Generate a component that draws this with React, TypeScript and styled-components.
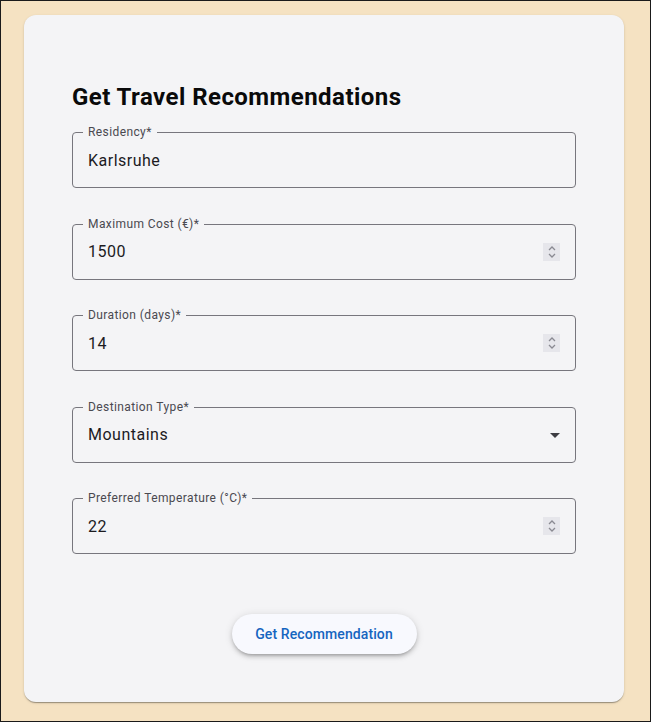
import React from "react";
import styled, { createGlobalStyle } from "styled-components";

const Global = createGlobalStyle`
  html, body { margin: 0; padding: 0; }
  body { font-family: Roboto, "Noto Sans", sans-serif; }
  * { box-sizing: border-box; }
`;

const Page = styled.div`
  width: 651px;
  height: 722px;
  border: 1px solid #1a1a1a;
  background: #f5e2c2;
  padding: 14px 26px 0 23px;
`;

const Card = styled.div`
  width: 600px;
  height: 687px;
  background: #f4f4f6;
  border-radius: 12px;
  box-shadow: 0 2px 1px -1px rgba(0,0,0,0.2), 0 1px 1px 0 rgba(0,0,0,0.14), 0 1px 3px 0 rgba(0,0,0,0.12);
  padding: 66px 48px 0 48px;
  display: flex;
  flex-direction: column;
`;

const Title = styled.h2`
  margin: 0;
  font-size: 24px;
  line-height: 32px;
  font-weight: 700;
  color: #0a0a0a;
  letter-spacing: 0.45px;
`;

const Form = styled.div`
  margin-top: 19px;
  display: flex;
  flex-direction: column;
  gap: 35.5px;
`;

const Field = styled.div`
  position: relative;
  height: 56px;
  border: 1px solid #77767d;
  border-radius: 4px;
  display: flex;
  align-items: center;
  padding: 0 15px;
`;

const Label = styled.span`
  position: absolute;
  top: -8px;
  left: 10px;
  padding: 0 5px;
  background: #f4f4f6;
  font-size: 12px;
  line-height: 14px;
  color: #4a4950;
  letter-spacing: 0.4px;
`;

const Value = styled.span`
  flex: 1;
  font-size: 16px;
  color: #1c1b1f;
  letter-spacing: 0.5px;
`;

const Spinner = styled.span`
  width: 17px;
  height: 18px;
  background: #e6e6eb;
  display: flex;
  align-items: center;
  justify-content: center;
`;

const Arrow = styled.span`
  display: flex;
  margin-right: -7px;
`;

const Actions = styled.div`
  margin-top: 60px;
  display: flex;
  justify-content: center;
`;

const Button = styled.button`
  height: 40px;
  width: 185px;
  border: none;
  border-radius: 20px;
  background: #f8f9fe;
  color: #1565c0;
  font-family: Roboto, sans-serif;
  font-size: 14px;
  font-weight: 500;
  letter-spacing: 0.1px;
  padding: 0 0 1px 0;
  box-shadow: 0 3px 3px -2px rgba(0,0,0,0.2), 0 3px 4px 0 rgba(0,0,0,0.14), 0 1px 8px 0 rgba(0,0,0,0.12);
  cursor: pointer;
`;

const SpinIcon = () => (
  <Spinner>
    <svg width="10" height="14" viewBox="0 0 10 14" fill="none" stroke="#8a8a92" strokeWidth="1.3">
      <path d="M2 5 L5 2 L8 5" />
      <path d="M2 9 L5 12 L8 9" />
    </svg>
  </Spinner>
);

const DropIcon = () => (
  <Arrow>
    <svg width="24" height="24" viewBox="0 0 24 24" fill="#3d3c42">
      <path d="M7 10l5 5 5-5z" />
    </svg>
  </Arrow>
);

type F = { label: string; value: string; kind: "text" | "number" | "select" };

const fields: F[] = [
  { label: "Residency*", value: "Karlsruhe", kind: "text" },
  { label: "Maximum Cost (€)*", value: "1500", kind: "number" },
  { label: "Duration (days)*", value: "14", kind: "number" },
  { label: "Destination Type*", value: "Mountains", kind: "select" },
  { label: "Preferred Temperature (°C)*", value: "22", kind: "number" },
];

export default function App() {
  return (
    <>
      <Global />
      <Page>
        <Card>
          <Title>Get Travel Recommendations</Title>
          <Form>
            {fields.map((f) => (
              <Field key={f.label}>
                <Label>{f.label}</Label>
                <Value>{f.value}</Value>
                {f.kind === "number" && <SpinIcon />}
                {f.kind === "select" && <DropIcon />}
              </Field>
            ))}
          </Form>
          <Actions>
            <Button>Get Recommendation</Button>
          </Actions>
        </Card>
      </Page>
    </>
  );
}
